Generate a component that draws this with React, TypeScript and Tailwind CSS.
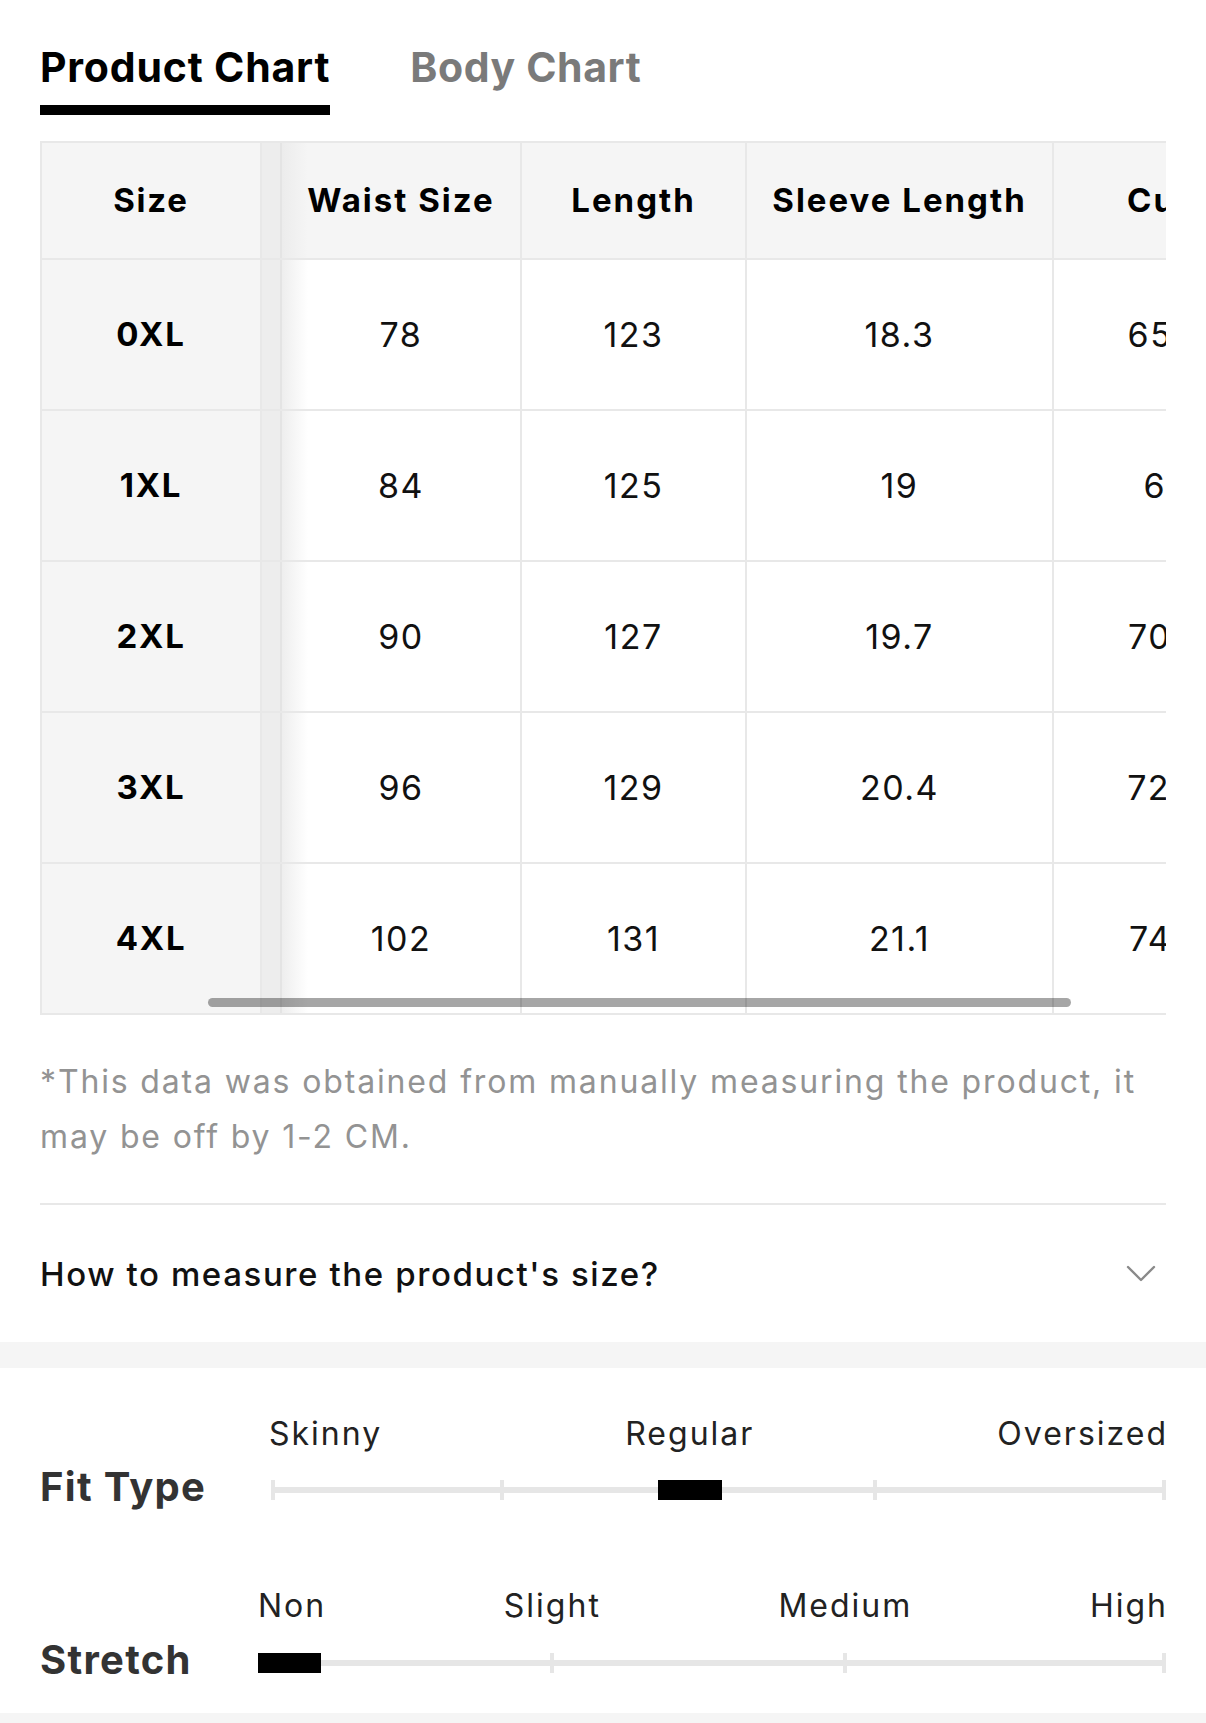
const rows = [
  ["0XL", "78", "123", "18.3", "65.8"],
  ["1XL", "84", "125", "19", "68"],
  ["2XL", "90", "127", "19.7", "70.2"],
  ["3XL", "96", "129", "20.4", "72.4"],
  ["4XL", "102", "131", "21.1", "74.6"],
];

const headers = ["Waist Size", "Length", "Sleeve Length", "Cuff"];
const widths = ["w-[240px]", "w-[225px]", "w-[307px]", "w-[226px]"];

function Row({ cells, header }: { cells: string[]; header?: boolean }) {
  const [size, ...rest] = cells;
  return (
    <div
      className={
        "flex shrink-0 border-b-2 border-[#e8e8e8] " +
        (header ? "h-[117px] bg-[#f5f5f5]" : "h-[151px] bg-white")
      }
    >
      <div className="flex w-[220px] shrink-0 items-center justify-center border-r-2 border-[#e8e8e8] bg-[#f5f5f5] text-[33px] font-bold tracking-[1.8px]">
        {size}
      </div>
      <div className="w-[20px] shrink-0 border-r-2 border-[#e4e4e4] bg-[#ededed]" />
      {rest.map((c, i) => (
        <div
          key={i}
          className={
            widths[i] +
            " flex shrink-0 items-center justify-center border-r-2 border-[#e8e8e8] " +
            (header ? "text-[33px] font-bold tracking-[2px]" : "text-[34px] tracking-[1.5px] text-[#111]") +
            (i === 0
              ? header
                ? " bg-[linear-gradient(to_right,#ececec,#f5f5f5_26px)]"
                : " bg-[linear-gradient(to_right,#eeeeee,#ffffff_26px)]"
              : "")
          }
        >
          {c}
        </div>
      ))}
    </div>
  );
}

export default function App() {
  return (
    <div className="min-h-[1723px] bg-white font-['Inter',sans-serif] text-black">
      <div className="px-[40px] pt-[47px]">
        <div className="flex items-start gap-[80px]">
          <div className="flex flex-col">
            <span className="text-[41px] font-bold leading-[40px] tracking-[0.8px]">Product Chart</span>
            <div className="mt-[18px] h-[10px] bg-black" />
          </div>
          <span className="text-[41px] font-bold leading-[40px] tracking-[0.6px] text-[#7a7a7a]">Body Chart</span>
        </div>

        <div className="relative mt-[26px] w-[1126px] overflow-hidden border-l-2 border-t-2 border-[#e8e8e8]">
          <div className="w-[1300px]">
            <Row header cells={["Size", ...headers]} />
            {rows.map((r) => (
              <Row key={r[0]} cells={r} />
            ))}
          </div>
          <div className="absolute bottom-[8px] left-[166px] h-[9px] w-[863px] rounded-full bg-black/35" />
        </div>

        <p className="mt-[39px] text-[32px] leading-[55px] tracking-[1.85px] text-[#939393]">
          *This data was obtained from manually measuring the product, it may be off by 1-2 CM.
        </p>
        <div className="mt-[39px] h-[2px] bg-[#e8e8e8]" />
        <div className="flex h-[137px] items-center justify-between">
          <span className="text-[33px] font-medium leading-[40px] tracking-[1.6px] text-[#111]">
            How to measure the product's size?
          </span>
          <svg className="mr-[10px]" width="30" height="18" viewBox="0 0 30 18" fill="none">
            <polyline points="2,2 15,15 28,2" stroke="#8a8a8a" strokeWidth="2.4" strokeLinecap="round" strokeLinejoin="round" />
          </svg>
        </div>
      </div>

      <div className="h-[26px] bg-[#f5f5f5]" />

      <div className="px-[40px] pb-[26px] pt-[48px]">
        <div className="flex justify-between pl-[229px] text-[32px] leading-[36px] tracking-[2px] text-[#222]">
          <span>Skinny</span>
          <span>Regular</span>
          <span className="-mr-[2px]">Oversized</span>
        </div>
        <div className="mt-[14px] flex h-[48px] items-center">
          <span className="w-[231px] shrink-0 pb-[6px] text-[40px] font-bold leading-[48px] tracking-[1.3px] text-[#333]">Fit Type</span>
          <div className="relative h-[20px] flex-1">
            <div className="absolute left-0 right-0 top-[7px] h-[6px] bg-[#e6e6e6]" />
            <div className="absolute left-0 top-0 h-[20px] w-[4px] bg-[#e6e6e6]" />
            <div className="absolute left-[229px] top-0 h-[20px] w-[4px] bg-[#e6e6e6]" />
            <div className="absolute left-[602px] top-0 h-[20px] w-[4px] bg-[#e6e6e6]" />
            <div className="absolute right-0 top-0 h-[20px] w-[4px] bg-[#e6e6e6]" />
            <div className="absolute left-[387px] top-0 h-[20px] w-[64px] bg-black" />
          </div>
        </div>

        <div className="mt-[74px] flex justify-between pl-[218px] text-[32px] leading-[36px] tracking-[2px] text-[#222]">
          <span>Non</span>
          <span>Slight</span>
          <span>Medium</span>
          <span className="-mr-[2px]">High</span>
        </div>
        <div className="mt-[15px] flex h-[48px] items-center">
          <span className="w-[218px] shrink-0 pb-[6px] text-[40px] font-bold leading-[48px] tracking-[1.3px] text-[#333]">Stretch</span>
          <div className="relative h-[20px] flex-1">
            <div className="absolute left-0 right-0 top-[7px] h-[6px] bg-[#e6e6e6]" />
            <div className="absolute left-[292px] top-0 h-[20px] w-[4px] bg-[#e6e6e6]" />
            <div className="absolute left-[585px] top-0 h-[20px] w-[4px] bg-[#e6e6e6]" />
            <div className="absolute right-0 top-0 h-[20px] w-[4px] bg-[#e6e6e6]" />
            <div className="absolute left-0 top-0 h-[20px] w-[63px] bg-black" />
          </div>
        </div>
      </div>

      <div className="h-[10px] bg-[#f5f5f5]" />
    </div>
  );
}
